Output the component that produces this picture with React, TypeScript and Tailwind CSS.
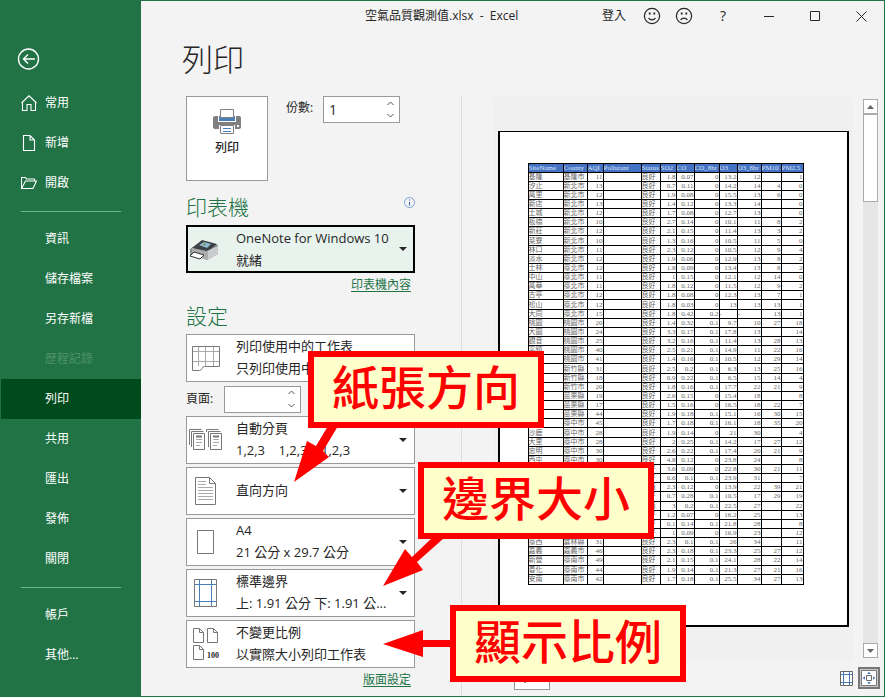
import type { ReactNode } from 'react'
import clsx from 'clsx'

// AQI sheet shown in the print preview
const columns = [
  { name: 'SiteName', width: 'w-[35px]' },
  { name: 'County', width: 'w-[24px]' },
  { name: 'AQI', width: 'w-[16px]' },
  { name: 'Pollutant', width: 'w-[38px]' },
  { name: 'Status', width: 'w-[19px]' },
  { name: 'SO2', width: 'w-[16px]' },
  { name: 'CO', width: 'w-[18px]' },
  { name: 'CO_8hr', width: 'w-[25px]' },
  { name: 'O3', width: 'w-[18px]' },
  { name: 'O3_8hr', width: 'w-[24px]' },
  { name: 'PM10', width: 'w-[20px]' },
  { name: 'PM2.5', width: 'w-[22px]' },
]

const sheet = `基隆,基隆市,11,,良好,1.8,0.07,0,13.2,12,,1
汐止,新北市,13,,良好,0.7,0.11,0,14.2,14,4,0
萬里,新北市,12,,良好,1.9,0.08,0,15.5,13,6,0
新店,新北市,13,,良好,1.4,0.12,0,13.3,14,,0
土城,新北市,12,,良好,1.7,0.08,0,12.7,13,,0
板橋,新北市,10,,良好,2.7,0.14,0,10.1,11,8,2
新莊,新北市,12,,良好,2.1,0.15,0,11.4,13,3,2
菜寮,新北市,10,,良好,1.3,0.16,0,10.5,11,5,0
林口,新北市,11,,良好,2.3,0.12,0,10.5,12,9,4
淡水,新北市,12,,良好,1.9,0.06,0,12.9,13,8,2
士林,臺北市,12,,良好,1.8,0.09,0,13.4,13,8,2
中山,臺北市,11,,良好,1,0.15,0,12.1,12,14,0
萬華,臺北市,11,,良好,1.8,0.12,0,11.5,12,9,2
古亭,臺北市,12,,良好,1.8,0.08,0,12.3,13,7,1
松山,臺北市,12,,良好,1.8,0.03,0,13,13,13,1
大同,臺北市,15,,良好,1.8,0.42,0.2,-,-,13,1
桃園,桃園市,20,,良好,1.4,0.32,0.1,9.7,10,27,18
大園,桃園市,24,,良好,3.3,0.17,0.1,17.8,13,,14
觀音,桃園市,25,,良好,3.2,0.16,0.1,11.4,13,28,13
平鎮,桃園市,40,,良好,2.5,0.21,0.1,14.9,11,22,16
,桃園市,41,,良好,1.4,0.16,0.1,10.5,12,29,14
,新竹縣,31,,良好,2.5,0.2,0.1,6.3,13,25,16
,新竹縣,18,,良好,0.9,0.22,0.1,6.5,15,14,4
,新竹市,20,,良好,1.8,0.16,0.1,17.7,22,21,9
,苗栗縣,19,,良好,2.6,0.15,0,15.4,18,,8
,苗栗縣,17,,良好,1.5,0.16,0,16.5,18,22,7
,苗栗縣,44,,良好,1.9,0.18,0.1,15.1,16,30,15
,臺中市,45,,良好,1.7,0.18,0.1,16.1,18,35,20
沙鹿,臺中市,28,,良好,1.9,0.14,0,21,30,,4
大里,臺中市,28,,良好,2,0.25,0.1,14.2,17,27,12
忠明,臺中市,30,,良好,2.6,0.22,0.1,17.4,20,21,9
西屯,臺中市,30,,良好,4.8,0.12,0,23.8,24,,8
,,,,良好,3.6,0.09,0,22.8,30,21,11
,,,,良好,0.6,0.1,0.1,23.9,31,,7
,,,,普通,2.3,0.12,0,13.9,22,39,21
,,,,良好,0.7,0.28,0.1,10.5,17,29,19
,,,,普通,3,0.2,0.1,22.5,27,,22
,,,,良好,1.2,0.07,0,16.2,25,,13
,,,,良好,0.1,0.14,0.1,21.8,28,,8
,,,,良好,1,0.09,0,16.9,23,,12
臺西,雲林縣,31,,良好,2.3,0.1,0.1,26,34,,11
嘉義,嘉義市,46,,良好,2.3,0.18,0.1,23.3,25,27,12
新營,臺南市,49,,良好,2.1,0.15,0.1,24.1,28,22,14
善化,臺南市,44,,良好,1.9,0.14,0.1,21.3,27,21,16
安南,臺南市,42,,良好,1.7,0.18,0.1,25.5,34,27,13`
  .split('\n')
  .map(line => line.split(','))

interface NavItemProps {
  label: string
  icon?: ReactNode
  active?: boolean
  disabled?: boolean
}

function NavItem({ label, icon, active = false, disabled = false }: NavItemProps) {
  return (
    <a
      href="#"
      aria-current={active ? 'page' : undefined}
      aria-disabled={disabled || undefined}
      className={clsx(
        'flex h-10 items-center gap-2 text-xs',
        icon ? 'pl-5' : 'pl-11',
        active && 'bg-[#004b1c]',
        disabled ? 'text-[#4f9169]' : 'text-white',
      )}
    >
      {icon}
      {label}
    </a>
  )
}

function NavDivider() {
  return (
    <div className="flex h-4 items-center px-5">
      <div className="h-px w-full bg-[#6fb38a]" />
    </div>
  )
}

function Sidebar() {
  return (
    <nav className="w-[140px] shrink-0 bg-[#217346] pt-[47px]">
      <button type="button" aria-label="返回" className="ml-4 block text-white">
        <svg width="24" height="22" viewBox="0 0 24 22" fill="none" stroke="currentColor">
          <circle cx="11.5" cy="11" r="10" strokeWidth="1.4" />
          <path d="M18 11H6.5M11 6.5 6.5 11l4.5 4.5" strokeWidth="1.4" />
        </svg>
      </button>
      <div className="pt-[13px]">
        <NavItem
          label="常用"
          icon={
            <svg width="16" height="16" viewBox="0 0 16 16" fill="none" stroke="currentColor" strokeWidth="1.1">
              <path d="M.5 8 8 .8 15.500 8M1.500 7v8.500h4.500v-6h4v6h4.500V7" />
            </svg>
          }
        />
        <NavItem
          label="新增"
          icon={
            <svg width="16" height="16" viewBox="0 0 16 16" fill="none" stroke="currentColor" strokeWidth="1.1">
              <path d="M2.500.5h6.500l4.500 4.500v10.500h-11zM9 .5V5h4.500" />
            </svg>
          }
        />
        <NavItem
          label="開啟"
          icon={
            <svg width="16" height="16" viewBox="0 0 16 16" fill="none" stroke="currentColor" strokeWidth="1.1">
              <path d="M.5 13.500v-11h4l1 1.500h8v2M.5 13.500l4-7.500h11l-3.500 7.500z" />
            </svg>
          }
        />
      </div>
      <NavDivider />
      <NavItem label="資訊" />
      <NavItem label="儲存檔案" />
      <NavItem label="另存新檔" />
      <NavItem label="歷程記錄" disabled />
      <NavItem label="列印" active />
      <NavItem label="共用" />
      <NavItem label="匯出" />
      <NavItem label="發佈" />
      <NavItem label="關閉" />
      <NavDivider />
      <NavItem label="帳戶" />
      <NavItem label="其他..." />
    </nav>
  )
}

function TitleBar() {
  return (
    <header className="flex h-[30px] items-center pl-56 text-xs text-[#262626]">
      <span className="whitespace-pre">空氣品質觀測值.xlsx  -  Excel</span>
      <div className="ml-auto flex h-full">
        <button type="button" className="mr-2 px-0.5">登入</button>
        <button type="button" aria-label="微笑" className="flex w-8 items-center justify-center">
          <svg width="18" height="18" viewBox="0 0 18 18" fill="none" stroke="currentColor" strokeWidth="1.2">
            <circle cx="9" cy="9" r="7.600" />
            <path d="M5.500 11.200c1.800 2.200 5.200 2.200 7 0" />
            <path d="M6.700 5.500v2M11.300 5.500v2" strokeWidth="1.800" />
          </svg>
        </button>
        <button type="button" aria-label="皺眉" className="flex w-8 items-center justify-center">
          <svg width="18" height="18" viewBox="0 0 18 18" fill="none" stroke="currentColor" strokeWidth="1.2">
            <circle cx="9" cy="9" r="7.600" />
            <path d="M5.500 13c1.800-2.600 5.200-2.600 7 0" />
            <path d="M6.700 5.500v2M11.300 5.500v2" strokeWidth="1.800" />
          </svg>
        </button>
        <button type="button" aria-label="說明" className="w-[46px] text-sm">?</button>
        <button type="button" aria-label="最小化" className="flex w-[46px] items-center justify-center">
          <svg width="11" height="11" stroke="currentColor"><path d="M0 5.500h10" /></svg>
        </button>
        <button type="button" aria-label="最大化" className="flex w-[46px] items-center justify-center">
          <svg width="11" height="11" fill="none" stroke="currentColor"><path d="M.5.5h9v9h-9z" /></svg>
        </button>
        <button type="button" aria-label="關閉視窗" className="flex w-[46px] items-center justify-center">
          <svg width="11" height="11" fill="none" stroke="currentColor"><path d="m.5.5 10 10m0-10-10 10" /></svg>
        </button>
      </div>
    </header>
  )
}

function Spinner({ id, value }: { id: string; value: string }) {
  return (
    <div className="flex h-[27px] w-[77px] border border-[#999] bg-white">
      <input id={id} defaultValue={value} inputMode="numeric" className="min-w-0 flex-1 pl-[5px] text-sm outline-none" />
      <div className="flex w-3 flex-col text-[#555]">
        <button type="button" aria-label="增加" className="flex flex-1 items-center">
          <svg width="8" height="5" fill="none" stroke="currentColor"><path d="m.5 4 3-3 3 3" /></svg>
        </button>
        <button type="button" aria-label="減少" className="flex flex-1 items-center">
          <svg width="8" height="5" fill="none" stroke="currentColor"><path d="m.5 1 3 3 3-3" /></svg>
        </button>
      </div>
    </div>
  )
}

interface OptionBoxProps {
  label: string
  value: string
  detail?: string
  icon: ReactNode
  caret?: boolean
  selected?: boolean
}

function OptionBox({ label, value, detail, icon, caret = true, selected = false }: OptionBoxProps) {
  return (
    <label
      className={clsx(
        'flex h-12 items-center text-[13px] leading-[22px]',
        selected ? 'border-2 border-black bg-[#e9f3ee]' : 'border border-[#999] bg-white px-px',
      )}
    >
      <span className="flex w-12 shrink-0 pl-px">{icon}</span>
      <span className={clsx('flex min-w-0 flex-1 flex-col whitespace-pre', !selected && 'pb-0.5')}>
        <select aria-label={label} className="h-[22px] w-full appearance-none bg-transparent p-0 outline-none">
          <option>{value}</option>
        </select>
        {detail && <span>{detail}</span>}
      </span>
      {caret && (
        <svg width="8" height="5" className="mr-1.5 shrink-0 fill-[#262626]"><path d="M0 0h8L4 4z" /></svg>
      )}
    </label>
  )
}

function PrinterIcon() {
  return (
    <svg width="30" height="28" viewBox="0 0 30 28">
      <path d="M1 14 13 6l16 4v9l-11 6-8-3-9-2z" fill="#8b8d8f" />
      <path d="m3 13 10-8 15 4-9 7z" fill="#3b4145" />
      <path d="m10 10 5-3 7 2-4 4z" fill="#8fb8cf" />
      <path d="m14 8 3 1-2 2z" fill="#6a9a55" />
      <path d="m18 16 11-5v8l-11 6z" fill="#c9cbcd" />
      <path d="m3 13 16 4v8l-9-3v-3l-7-2z" fill="#a9abad" />
      <path d="m5 17 10 3-4 4-10-3z" fill="#fff" stroke="#333" />
    </svg>
  )
}

function SheetIcon() {
  return (
    <svg width="32" height="28" viewBox="0 0 32 28" fill="none" stroke="#777">
      <path d="M9.500 3v19M16.500 3v19M24.500 3v19M3 7.500h27M3 17.500h27M13 22.500" stroke="#aaa" />
      <path d="M3.500 2.500h27v20h-15c-3 0-2 4-5 4h-7z" />
    </svg>
  )
}

function CollatedIcon() {
  return (
    <svg width="34" height="22" viewBox="0 0 34 22" fill="none" stroke="#777">
      <path d="M.5 16V.5h12M2.500 18V2.500h12M17.500 3V.5h12M19.500 18V2.500h12" />
      <path d="M4.500 4.500h11v16h-11zM21.500 4.500h11v16h-11z" fill="#fff" />
      <path d="M7 7.500h6M24 7.500h6" strokeWidth="2" />
      <path d="M7 10.500h6M7 13.500h6M7 16.500h4M24 10.500h6M24 13.500h6M24 16.500h4" stroke="#aaa" />
    </svg>
  )
}

function PortraitIcon() {
  return (
    <svg width="30" height="30" viewBox="0 0 30 30" fill="none" stroke="#777">
      <path d="M6.500 1.500h14l6 6v21h-20zM20.500 1.500v6h6" />
      <path d="M9 5.500h8M9 8.500h8M9 11.500h15M9 14.500h15M9 17.500h15M9 20.500h15M9 23.500h15" stroke="#aaa" />
    </svg>
  )
}

function PaperIcon() {
  return (
    <svg width="30" height="26" viewBox="0 0 30 26" fill="none" stroke="#777">
      <path d="M8.500 1.500h16v23h-16z" />
    </svg>
  )
}

function MarginsIcon() {
  return (
    <svg width="30" height="30" viewBox="0 0 30 30" fill="none">
      <path d="M5.500 1.500h22v27h-22z" stroke="#777" />
      <path d="M10.500 2v26M22.500 2v26M6 6.500h21M6 23.500h21" stroke="#4a7ebb" />
    </svg>
  )
}

function ScalingIcon() {
  return (
    <span className="flex flex-col gap-0.5">
      <svg width="32" height="15" viewBox="0 0 32 15" fill="none" stroke="#777">
        <path d="M4.500.5h6l4 4v10h-10zM10.500.5v4h4M18.500.5h6l4 4v10h-10zM24.500.5v4h4" />
      </svg>
      <span className="flex items-end gap-0.5">
        <svg width="16" height="15" viewBox="0 0 16 15" fill="none" stroke="#777">
          <path d="M4.500.5h6l4 4v10h-10zM10.500.5v4h4" />
        </svg>
        <span className="font-['Liberation_Serif',serif] text-[8px] leading-[8px] font-bold">100</span>
      </span>
    </span>
  )
}

function SettingsPanel() {
  return (
    <section className="w-[321px] shrink-0 border-r border-[#ddd] pr-[46px] pl-[45px]">
      <div className="flex items-start">
        <button
          type="button"
          className="flex h-[85px] w-[82px] flex-col items-center gap-[5px] border border-[#999] bg-white pt-3 text-xs font-medium"
        >
          <svg width="28" height="26" viewBox="0 0 28 26">
            <path d="M2 7h24a2 2 0 0 1 2 2v9a2 2 0 0 1-2 2H2a2 2 0 0 1-2-2V9a2 2 0 0 1 2-2z" fill="#808080" />
            <path d="M5 6h18v7H5z" fill="#fff" />
            <path d="M6 7h16v5H6z" fill="#4a80b8" />
            <path d="M7.500.5h13v8h-13z" fill="#fff" stroke="#808080" />
            <path d="M6 16h16v5H6z" fill="#fff" />
            <path d="M7.500 16.500h13v8h-13z" fill="#fff" stroke="#808080" />
            <path d="M10 19.500h8M10 22.500h8" stroke="#4a80b8" />
            <path d="M24 16h2v2h-2z" fill="#fff" />
          </svg>
          列印
        </button>
        <label htmlFor="copies" className="ml-[18px] w-[37px] pt-1 text-xs">份數:</label>
        <Spinner id="copies" value="1" />
      </div>

      <div className="mt-2 flex h-9 justify-between">
        <h2 className="pt-1 text-[21px] leading-7 font-light text-[#217346]">印表機</h2>
        <svg width="11" height="11" viewBox="0 0 11 11" fill="none" className="mt-2">
          <circle cx="5.500" cy="5.500" r="5" stroke="#7ba3dc" />
          <path d="M5.500 5v3.500M5.500 2.500v1" stroke="#2b5fa8" />
        </svg>
      </div>
      <OptionBox label="印表機" value="OneNote for Windows 10" detail="就緒" icon={<PrinterIcon />} selected />
      <div className="flex h-6 items-center justify-end pr-1">
        <a href="#" className="text-xs text-[#217346] underline underline-offset-2">印表機內容</a>
      </div>

      <h2 className="mb-1 pt-[5px] text-[21px] leading-7 font-light text-[#217346]">設定</h2>
      <div className="flex flex-col gap-[3px]">
        <OptionBox label="列印範圍" value="列印使用中的工作表" detail="只列印使用中的工作表" icon={<SheetIcon />} />
        <div className="flex h-7 items-center">
          <label htmlFor="pages" className="w-[38px] text-xs">頁面:</label>
          <Spinner id="pages" value="" />
        </div>
        <OptionBox label="分頁" value="自動分頁" detail="1,2,3    1,2,3    1,2,3" icon={<CollatedIcon />} />
        <OptionBox label="方向" value="直向方向" icon={<PortraitIcon />} />
        <OptionBox label="紙張" value="A4" detail="21 公分 x 29.7 公分" icon={<PaperIcon />} />
        <OptionBox label="邊界" value="標準邊界" detail="上: 1.91 公分 下: 1.91 公..." icon={<MarginsIcon />} />
        <OptionBox label="縮放比例" value="不變更比例" detail="以實際大小列印工作表" icon={<ScalingIcon />} caret={false} />
      </div>
      <div className="flex h-6 items-center justify-end pr-1">
        <a href="#" className="text-xs text-[#217346] underline underline-offset-2">版面設定</a>
      </div>
    </section>
  )
}

function SheetTable() {
  return (
    <table className="h-[422px] w-[276px] table-fixed border-collapse font-['Liberation_Serif','Noto_Sans_CJK_TC',serif] text-[7px] leading-[8px] text-[#666]">
      <colgroup>
        {columns.map(col => <col key={col.name} className={col.width} />)}
      </colgroup>
      <thead>
        <tr className="bg-[#4472c4] text-[#dce6f7]">
          {columns.map(col => (
            <th key={col.name} className="overflow-hidden border border-black p-0 text-left font-normal whitespace-nowrap">
              {col.name}
            </th>
          ))}
        </tr>
      </thead>
      <tbody>
        {sheet.map((row, r) => (
          <tr key={r}>
            {row.map((cell, i) => (
              <td
                key={i}
                className={clsx(
                  'overflow-hidden border border-black p-0 whitespace-nowrap',
                  i < 2 || i === 4 || cell === '-' ? 'text-left' : 'text-right',
                )}
              >
                {cell}
              </td>
            ))}
          </tr>
        ))}
      </tbody>
    </table>
  )
}

function ScrollBar() {
  return (
    <div className="my-0.5 flex w-[15px] shrink-0 flex-col bg-[#e6e6e6]">
      <button type="button" aria-label="向上捲動" className="flex h-[15px] items-center justify-center border border-[#ababab] bg-white">
        <svg width="7" height="4" fill="#666"><path d="M0 4h7L3.500 0z" /></svg>
      </button>
      <div className="h-[88px] border border-[#ababab] bg-white" />
      <button type="button" aria-label="向下捲動" className="mt-auto flex h-[15px] items-center justify-center border border-[#ababab] bg-white">
        <svg width="7" height="4" fill="#666"><path d="M0 0h7L3.500 4z" /></svg>
      </button>
    </div>
  )
}

function PreviewPanel() {
  return (
    <section className="flex min-w-0 flex-1 flex-col pt-px">
      <div className="flex h-[563px] gap-2.5 pr-1.5 pl-[31px]">
        <div className="flex flex-1 items-center justify-center bg-[#f0f0f0]">
          <div className="h-[496px] w-[351px] border-2 border-t border-black bg-white pt-[31px] pl-7">
            <SheetTable />
          </div>
        </div>
        <ScrollBar />
      </div>
      <footer className="flex flex-1 items-center pr-1 pl-[52px] text-[13px]">
        <input aria-label="目前頁碼" defaultValue="1" className="h-6 w-9 border border-[#999] bg-white pl-1.5 outline-none" />
        <span className="pl-0.5">/ 1</span>
        <button type="button" aria-label="顯示邊界" className="ml-auto">
          <svg width="13" height="15" viewBox="0 0 13 15" fill="none">
            <path d="M.5.5h12v14H.5z" fill="#fff" stroke="#666" />
            <path d="M3.500 1v13M9.500 1v13M1 3.500h11M1 11.500h11" stroke="#4a7ebb" />
          </svg>
        </button>
        <button type="button" aria-label="縮放至頁面" className="ml-[5px] border-2 border-[#777] bg-[#c8c8c8] p-px">
          <svg width="16" height="16" viewBox="0 0 16 16" fill="none">
            <path d="M.5.5h15v15H.5z" fill="#fff" stroke="#777" />
            <path d="M5.500 5.500h5v5h-5z" stroke="#666" />
            <path d="M8 1.500 9.800 4H6.200zM8 14.500 9.800 12H6.200zM1.500 8 4 6.200v3.600zM14.500 8 12 6.200v3.600z" fill="#4a7ebb" />
          </svg>
        </button>
      </footer>
    </section>
  )
}

function Callout({ text, className }: { text: string; className: string }) {
  return (
    <div
      className={clsx(
        'absolute flex h-[77px] w-[236px] items-center justify-center border-6 border-[#f00] bg-[#ffffcc] pb-1 text-[47px] font-medium whitespace-nowrap text-[#f00]',
        className,
      )}
    >
      {text}
    </div>
  )
}

export default function App() {
  return (
    <div className="relative flex min-h-screen border border-[#217346] bg-[#f3f3f3] font-['Open_Sans','Noto_Sans_CJK_TC',sans-serif] text-[#262626]">
      <Sidebar />
      <main className="flex min-w-0 flex-1 flex-col">
        <TitleBar />
        <h1 className="h-[65px] pt-1.5 pl-[41px] text-[31px] leading-[44px] font-light">列印</h1>
        <div className="flex flex-1">
          <SettingsPanel />
          <PreviewPanel />
        </div>
      </main>

      {/* Annotations */}
      <svg className="pointer-events-none absolute top-0 left-0 h-full w-full fill-[#f00]">
        <path d="m293 481 13-41 9 5 12-20h10l-15 25 6 6z" />
        <path d="m382 585 22-37 7 8 20-19h12l-27 24 6 8z" />
        <path d="m382 643 40-14v10h28v7h-28v10z" />
      </svg>
      <Callout text="紙張方向" className="top-[350px] left-[307px]" />
      <Callout text="邊界大小" className="top-[461px] left-[417px]" />
      <Callout text="顯示比例" className="top-[604px] left-[449px]" />
    </div>
  )
}
